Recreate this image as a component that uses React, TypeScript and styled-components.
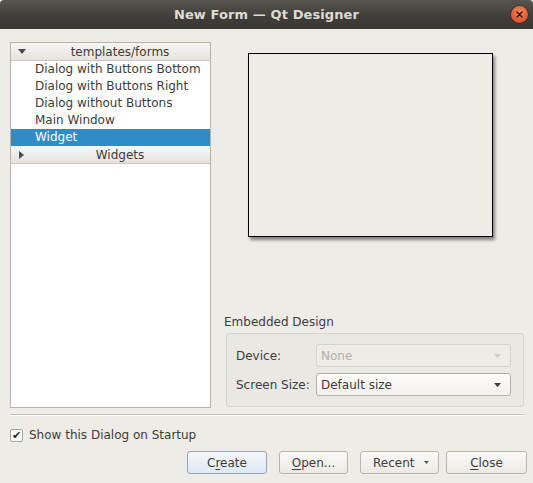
import React from 'react';
import styled, { createGlobalStyle } from 'styled-components';

const GlobalStyle = createGlobalStyle`
  html, body {
    margin: 0;
    padding: 0;
    background: #efece8;
  }
  * {
    box-sizing: border-box;
  }
`;

const Window = styled.div`
  width: 533px;
  height: 483px;
  display: flex;
  flex-direction: column;
  background: #efece8;
  font-family: 'DejaVu Sans', 'Noto Sans', sans-serif;
  font-size: 12px;
  color: #3c3c3c;
  overflow: hidden;
`;

const TitleBar = styled.div`
  position: relative;
  height: 29px;
  flex: none;
  display: flex;
  align-items: center;
  justify-content: center;
  background: linear-gradient(#56554f, #3e3d39 60%, #3a3935);
  border-radius: 4px 4px 0 0;
`;

const Title = styled.span`
  font-family: 'DejaVu Sans', sans-serif;
  font-weight: bold;
  font-size: 13px;
  color: #dfdbd2;
  letter-spacing: 0.1px;
`;

const CloseCircle = styled.div`
  position: absolute;
  right: 5px;
  top: 6px;
  width: 17px;
  height: 17px;
  border-radius: 50%;
  background: radial-gradient(circle at 50% 35%, #f58a5e, #e2532b 70%, #c9441f);
  box-shadow: 0 0 0 1px rgba(0, 0, 0, 0.25);
  display: flex;
  align-items: center;
  justify-content: center;
`;

const Body = styled.div`
  flex: 1;
  display: flex;
  flex-direction: column;
  padding: 13px 8px 0 10px;
`;

const Main = styled.div`
  display: flex;
  gap: 13px;
  height: 366px;
`;

const Tree = styled.div`
  width: 201px;
  flex: none;
  background: #ffffff;
  border: 1px solid #b6b2ac;
  display: flex;
  flex-direction: column;
`;

const Category = styled.div`
  height: 18px;
  flex: none;
  display: flex;
  align-items: center;
  background: linear-gradient(#f7f6f4, #e6e3df);
  border-bottom: 1px solid #c9c5bf;
  color: #3c3c3c;
`;

const Expander = styled.span`
  width: 13px;
  margin-left: 4px;
  display: flex;
  align-items: center;
  justify-content: center;
`;

const CategoryText = styled.span`
  flex: 1;
  text-align: center;
  padding-left: 2px;
  line-height: 16px;
`;

const Item = styled.div<{ selected?: boolean }>`
  height: 17px;
  flex: none;
  line-height: 17px;
  padding-left: 24px;
  white-space: nowrap;
  background: ${(p) => (p.selected ? '#308cc6' : 'transparent')};
  color: ${(p) => (p.selected ? '#ffffff' : '#3c3c3c')};
`;

const RightPanel = styled.div`
  flex: 1;
  display: flex;
  flex-direction: column;
`;

const PreviewArea = styled.div`
  flex: 1;
  display: flex;
  justify-content: center;
  align-items: flex-start;
  padding: 11px 8px 0 0;
`;

const PreviewBox = styled.div`
  width: 245px;
  height: 184px;
  background: #efece8;
  border: 1px solid #000000;
  box-shadow: 2px 3px 3px rgba(0, 0, 0, 0.45);
`;

const SectionLabel = styled.div`
  line-height: 15px;
  margin-bottom: 3px;
  color: #3c3c3c;
`;

const GroupBox = styled.div`
  margin: 0 1px 1px 2px;
  padding: 10px 12px 10px 9px;
  border: 1px solid #d8d4ce;
  border-radius: 3px;
  background: #ebe8e4;
  display: flex;
  flex-direction: column;
  gap: 6px;
`;

const FormRow = styled.div`
  display: flex;
  align-items: center;
`;

const FormLabel = styled.span`
  width: 80px;
  flex: none;
`;

const Combo = styled.div<{ disabled?: boolean }>`
  flex: 1;
  height: 23px;
  display: flex;
  align-items: center;
  padding: 0 9px 0 4px;
  border: 1px solid ${(p) => (p.disabled ? '#d6d2cc' : '#b3afa9')};
  border-radius: 3px;
  background: ${(p) => (p.disabled ? '#efece8' : 'linear-gradient(#fdfdfc, #f3f1ee)')};
  color: ${(p) => (p.disabled ? '#b3afa9' : '#3c3c3c')};
`;

const ComboText = styled.span`
  flex: 1;
`;

const Separator = styled.div`
  margin-top: 6px;
  height: 2px;
  border-top: 1px solid #c4c0ba;
  border-bottom: 1px solid #ffffff;
`;

const CheckRow = styled.label`
  margin-top: 11px;
  display: flex;
  align-items: center;
  gap: 6px;
  height: 16px;
`;

const CheckBox = styled.span`
  width: 13px;
  height: 13px;
  background: #ffffff;
  border: 1px solid #a8a49e;
  border-radius: 2px;
  display: flex;
  align-items: center;
  justify-content: center;
  font-size: 11px;
  font-weight: bold;
  line-height: 11px;
  color: #2a2a2a;
`;

const ButtonRow = styled.div`
  margin-top: 8px;
  margin-right: -2px;
  display: flex;
  justify-content: flex-end;
  gap: 12px;
`;

const Button = styled.div<{ primary?: boolean; w: number; split?: boolean }>`
  width: ${(p) => p.w}px;
  height: 23px;
  display: flex;
  align-items: center;
  justify-content: ${(p) => (p.split ? 'space-between' : 'center')};
  padding: ${(p) => (p.split ? '0 9px 0 12px' : '0')};
  margin-right: ${(p) => (p.split ? '-5px' : '0')};
  border: 1px solid ${(p) => (p.primary ? '#8fa7bc' : '#b9b5af')};
  border-radius: 3px;
  background: ${(p) =>
    p.primary ? 'linear-gradient(#f5f8fb, #dde8f1)' : 'linear-gradient(#fbfaf9, #ece9e5)'};
  color: #3c3c3c;
`;

const Mnemonic = styled.span`
  text-decoration: underline;
  text-underline-offset: 2px;
`;

const TriangleDown = ({ color = '#4a4a4a', w = 8, h = 5 }: { color?: string; w?: number; h?: number }) => (
  <svg width={w} height={h} viewBox={`0 0 ${w} ${h}`}>
    <path d={`M0 0 L${w} 0 L${w / 2} ${h} Z`} fill={color} />
  </svg>
);

const TriangleRight = () => (
  <svg width="5" height="8" viewBox="0 0 5 8">
    <path d="M0 0 L5 4 L0 8 Z" fill="#4a4a4a" />
  </svg>
);

const templates = [
  'Dialog with Buttons Bottom',
  'Dialog with Buttons Right',
  'Dialog without Buttons',
  'Main Window',
  'Widget',
];

export default function App() {
  return (
    <Window>
      <GlobalStyle />
      <TitleBar>
        <Title>New Form — Qt Designer</Title>
        <CloseCircle>
          <svg width="7" height="7" viewBox="0 0 7 7">
            <path d="M1 1 L6 6 M6 1 L1 6" stroke="#3a1a0e" strokeWidth="1.5" strokeLinecap="round" />
          </svg>
        </CloseCircle>
      </TitleBar>
      <Body>
        <Main>
          <Tree>
            <Category>
              <Expander>
                <TriangleDown />
              </Expander>
              <CategoryText>templates/forms</CategoryText>
            </Category>
            {templates.map((t) => (
              <Item key={t} selected={t === 'Widget'}>
                {t}
              </Item>
            ))}
            <Category>
              <Expander>
                <TriangleRight />
              </Expander>
              <CategoryText>Widgets</CategoryText>
            </Category>
          </Tree>
          <RightPanel>
            <PreviewArea>
              <PreviewBox />
            </PreviewArea>
            <SectionLabel>Embedded Design</SectionLabel>
            <GroupBox>
              <FormRow>
                <FormLabel>Device:</FormLabel>
                <Combo disabled>
                  <ComboText>None</ComboText>
                  <TriangleDown color="#d2cec8" w={7} h={4} />
                </Combo>
              </FormRow>
              <FormRow>
                <FormLabel>Screen Size:</FormLabel>
                <Combo>
                  <ComboText>Default size</ComboText>
                  <TriangleDown color="#3c3c3c" w={7} h={4} />
                </Combo>
              </FormRow>
            </GroupBox>
          </RightPanel>
        </Main>
        <Separator />
        <CheckRow>
          <CheckBox>✔</CheckBox>
          Show this Dialog on Startup
        </CheckRow>
        <ButtonRow>
          <Button primary w={80}>
            <span>
              C<Mnemonic>r</Mnemonic>eate
            </span>
          </Button>
          <Button w={69}>
            <span>
              <Mnemonic>O</Mnemonic>pen...
            </span>
          </Button>
          <Button w={79} split>
            <span>Recent</span>
            <TriangleDown color="#5a5a5a" w={5} h={3} />
          </Button>
          <Button w={81}>
            <span>
              <Mnemonic>C</Mnemonic>lose
            </span>
          </Button>
        </ButtonRow>
      </Body>
    </Window>
  );
}
